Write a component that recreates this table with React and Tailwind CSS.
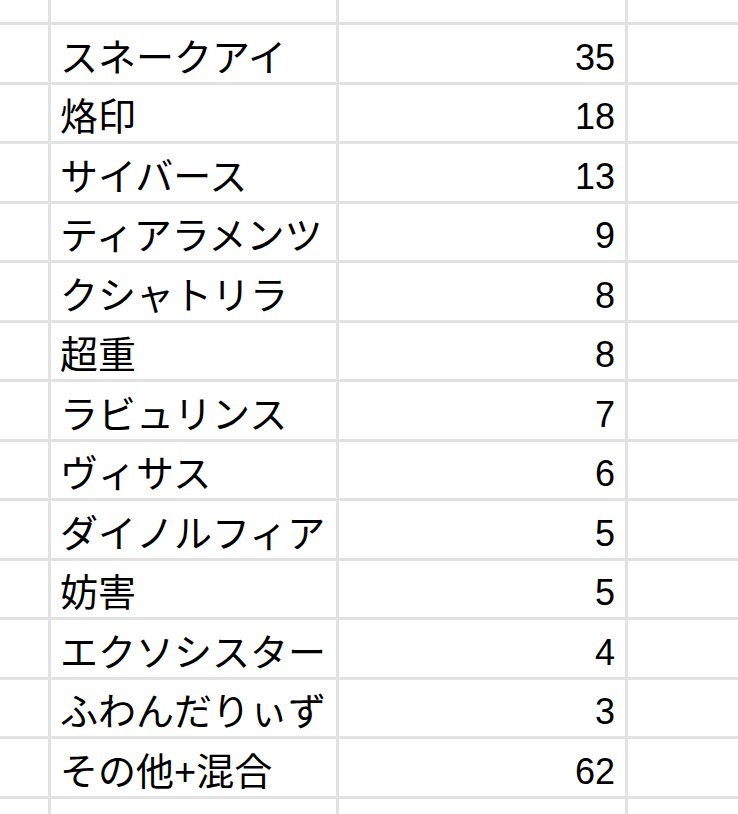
const rows = [
  ["スネークアイ", 35],
  ["烙印", 18],
  ["サイバース", 13],
  ["ティアラメンツ", 9],
  ["クシャトリラ", 8],
  ["超重", 8],
  ["ラビュリンス", 7],
  ["ヴィサス", 6],
  ["ダイノルフィア", 5],
  ["妨害", 5],
  ["エクソシスター", 4],
  ["ふわんだりぃず", 3],
  ["その他+混合", 62],
];

function Row({ name, count, h = "h-[59.5px]" }) {
  return (
    <div className={`flex ${h} border-b-[3px] border-[#e2e2e2]`}>
      <div className="w-[51px] shrink-0 border-r-[3px] border-[#e2e2e2]" />
      <div className="w-[288px] shrink-0 border-r-[3px] border-[#e2e2e2] flex items-end pl-[9px] pb-[5px] leading-none text-[38px] whitespace-nowrap">
        {name}
      </div>
      <div className="w-[289px] shrink-0 border-r-[3px] border-[#e2e2e2] flex items-end justify-end pr-[10px] pb-[6px] leading-none">
        {count}
      </div>
      <div className="flex-1" />
    </div>
  );
}

export default function App() {
  return (
    <div
      className="w-[738px] h-[814px] bg-white overflow-hidden text-[36px] text-black"
      style={{ fontFamily: '"Liberation Sans", "Noto Sans CJK JP", sans-serif' }}
    >
      <Row name="" count="" h="h-[25px]" />
      {rows.map(([name, count]) => (
        <Row key={name} name={name} count={count} />
      ))}
      {/* trailing partial row */}
      <div className="flex h-[20px]">
        <div className="w-[51px] shrink-0 border-r-[3px] border-[#e2e2e2]" />
        <div className="w-[288px] shrink-0 border-r-[3px] border-[#e2e2e2]" />
        <div className="w-[289px] shrink-0 border-r-[3px] border-[#e2e2e2]" />
      </div>
    </div>
  );
}
